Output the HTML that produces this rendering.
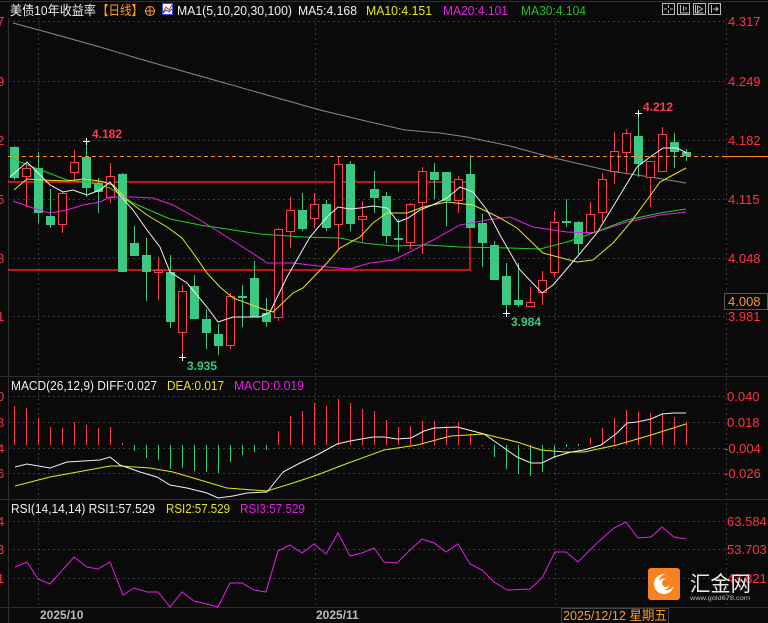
<!DOCTYPE html>
<html><head><meta charset="utf-8"><style>
html,body{margin:0;padding:0;background:#0a0a0a;}
body{width:768px;height:623px;overflow:hidden;position:relative;font-family:"Liberation Sans","Noto Sans CJK SC",sans-serif;}
svg{position:absolute;left:0;top:0;}
</style></head><body>
<svg width="768" height="623" viewBox="0 0 768 623" xmlns="http://www.w3.org/2000/svg" font-family="Liberation Sans, Noto Sans CJK SC, sans-serif">
<rect width="768" height="623" fill="#0a0a0a"/>
<g stroke="#3a3a3a" stroke-width="1" stroke-dasharray="2,3">
<line x1="8" y1="21.5" x2="726" y2="21.5"/><line x1="8" y1="81.5" x2="726" y2="81.5"/>
<line x1="8" y1="140.5" x2="726" y2="140.5"/><line x1="8" y1="199.5" x2="726" y2="199.5"/>
<line x1="8" y1="258.5" x2="726" y2="258.5"/><line x1="8" y1="316.5" x2="726" y2="316.5"/>
<line x1="8" y1="396.5" x2="726" y2="396.5"/><line x1="8" y1="422.5" x2="726" y2="422.5"/>
<line x1="8" y1="448.5" x2="726" y2="448.5"/><line x1="8" y1="473.5" x2="726" y2="473.5"/>
<line x1="8" y1="521.5" x2="726" y2="521.5"/><line x1="8" y1="549.5" x2="726" y2="549.5"/>
<line x1="8" y1="578.5" x2="726" y2="578.5"/>
<line x1="38.5" y1="18" x2="38.5" y2="607"/><line x1="315.5" y1="18" x2="315.5" y2="607"/>
<line x1="555.5" y1="18" x2="555.5" y2="607"/><line x1="726.5" y1="18" x2="726.5" y2="607"/>
</g>
<g stroke="#2e2e2e" stroke-width="1">
<line x1="0" y1="1.5" x2="768" y2="1.5"/>
<line x1="0" y1="376.5" x2="768" y2="376.5"/>
<line x1="0" y1="499.5" x2="768" y2="499.5"/>
<line x1="0" y1="607.5" x2="768" y2="607.5"/>
<line x1="8.5" y1="18" x2="8.5" y2="623"/>
</g>
<g stroke="#ff1a1a" stroke-width="1.5" fill="none">
<polyline points="8,182 470,182 470,270 8,270"/>
</g>
<polyline fill="none" stroke="#8a8a8a" stroke-width="1" points="13,23 50,33 100,47 140,59 200,76 260,93 320,110 370,122 405,130 440,133 467,137 510,146 550,157 610,171 650,177 686,183"/>
<g stroke-width="1">
<g stroke="#3cc882">
<line x1="14.5" y1="146" x2="14.5" y2="180"/><line x1="38.5" y1="152" x2="38.5" y2="223"/><line x1="50.5" y1="189" x2="50.5" y2="228"/>
<line x1="86.5" y1="141" x2="86.5" y2="197"/><line x1="98.5" y1="178" x2="98.5" y2="213"/><line x1="122.5" y1="173" x2="122.5" y2="272"/>
<line x1="134.5" y1="226" x2="134.5" y2="256"/><line x1="146.5" y1="238" x2="146.5" y2="301"/><line x1="170.5" y1="255" x2="170.5" y2="328"/>
<line x1="194.5" y1="275" x2="194.5" y2="319"/><line x1="206.5" y1="309" x2="206.5" y2="349"/><line x1="218.5" y1="324" x2="218.5" y2="355"/>
<line x1="242.5" y1="285" x2="242.5" y2="327"/><line x1="254.5" y1="261" x2="254.5" y2="317"/><line x1="266.5" y1="298" x2="266.5" y2="327"/>
<line x1="302.5" y1="193" x2="302.5" y2="231"/><line x1="326.5" y1="200" x2="326.5" y2="231"/><line x1="350.5" y1="161" x2="350.5" y2="231"/>
<line x1="374.5" y1="171" x2="374.5" y2="213"/><line x1="386.5" y1="192" x2="386.5" y2="243"/><line x1="398.5" y1="219" x2="398.5" y2="252"/>
<line x1="434.5" y1="163" x2="434.5" y2="199"/><line x1="446.5" y1="172" x2="446.5" y2="226"/><line x1="470.5" y1="155" x2="470.5" y2="228"/>
<line x1="482.5" y1="214" x2="482.5" y2="267"/><line x1="494.5" y1="241" x2="494.5" y2="280"/><line x1="506.5" y1="263" x2="506.5" y2="313"/>
<line x1="518.5" y1="263" x2="518.5" y2="307"/><line x1="566.5" y1="199" x2="566.5" y2="227"/><line x1="578.5" y1="221" x2="578.5" y2="254"/>
<line x1="638.5" y1="113" x2="638.5" y2="177"/><line x1="674.5" y1="133" x2="674.5" y2="168"/><line x1="686.5" y1="149" x2="686.5" y2="161"/>
</g>
<g stroke="#ff3b4b">
<line x1="26.5" y1="163" x2="26.5" y2="207"/><line x1="62.5" y1="191" x2="62.5" y2="233"/><line x1="74.5" y1="150" x2="74.5" y2="180"/>
<line x1="110.5" y1="163" x2="110.5" y2="203"/><line x1="158.5" y1="257" x2="158.5" y2="300"/><line x1="182.5" y1="285" x2="182.5" y2="358"/>
<line x1="230.5" y1="293" x2="230.5" y2="349"/><line x1="278.5" y1="228" x2="278.5" y2="321"/><line x1="290.5" y1="197" x2="290.5" y2="248"/>
<line x1="314.5" y1="193" x2="314.5" y2="228"/><line x1="338.5" y1="156" x2="338.5" y2="249"/><line x1="362.5" y1="201" x2="362.5" y2="242"/>
<line x1="410.5" y1="203" x2="410.5" y2="249"/><line x1="422.5" y1="167" x2="422.5" y2="254"/><line x1="458.5" y1="176" x2="458.5" y2="213"/>
<line x1="530.5" y1="287" x2="530.5" y2="307"/><line x1="542.5" y1="271" x2="542.5" y2="305"/><line x1="554.5" y1="211" x2="554.5" y2="277"/>
<line x1="590.5" y1="202" x2="590.5" y2="233"/><line x1="602.5" y1="173" x2="602.5" y2="222"/><line x1="614.5" y1="132" x2="614.5" y2="184"/>
<line x1="626.5" y1="129" x2="626.5" y2="174"/><line x1="650.5" y1="161" x2="650.5" y2="207"/><line x1="662.5" y1="127" x2="662.5" y2="172"/>
</g>
<g fill="#3cc882">
<rect x="10" y="147" width="9" height="31"/><rect x="34" y="168" width="9" height="45"/><rect x="46" y="216" width="9" height="9"/>
<rect x="82" y="157" width="9" height="31"/><rect x="94" y="183" width="9" height="9"/><rect x="118" y="174" width="9" height="98"/>
<rect x="130" y="243" width="9" height="13"/><rect x="142" y="255" width="9" height="17"/><rect x="166" y="272" width="9" height="50"/>
<rect x="190" y="286" width="9" height="33"/><rect x="202" y="319" width="9" height="14"/><rect x="214" y="334" width="9" height="12"/>
<rect x="238" y="296" width="9" height="2"/><rect x="250" y="278" width="9" height="39"/><rect x="262" y="313" width="9" height="9"/>
<rect x="298" y="210" width="9" height="19"/><rect x="322" y="204" width="9" height="24"/><rect x="346" y="164" width="9" height="60"/>
<rect x="370" y="189" width="9" height="9"/><rect x="382" y="196" width="9" height="40"/><rect x="394" y="238" width="9" height="2"/>
<rect x="430" y="172" width="9" height="8"/><rect x="442" y="172" width="9" height="29"/><rect x="466" y="174" width="9" height="54"/>
<rect x="478" y="223" width="9" height="20"/><rect x="490" y="245" width="9" height="35"/><rect x="502" y="276" width="9" height="29"/>
<rect x="514" y="300" width="9" height="5"/><rect x="562" y="221" width="9" height="2"/><rect x="574" y="222" width="9" height="22"/>
<rect x="634" y="136" width="9" height="28"/><rect x="670" y="142" width="9" height="10"/><rect x="682" y="152" width="9" height="4"/>
</g>
<g fill="#0a0a0a" stroke="#ff3b4b">
<rect x="22.5" y="168.5" width="8" height="8"/><rect x="58.5" y="193.5" width="8" height="31"/><rect x="70.5" y="162.5" width="8" height="10"/>
<rect x="106.5" y="176.5" width="8" height="21"/><rect x="154.5" y="270.5" width="8" height="2"/><rect x="178.5" y="291.5" width="8" height="41"/>
<rect x="226.5" y="296.5" width="8" height="49"/><rect x="274.5" y="229.5" width="8" height="88"/><rect x="286.5" y="210.5" width="8" height="21"/>
<rect x="310.5" y="204.5" width="8" height="14"/><rect x="334.5" y="164.5" width="8" height="60"/><rect x="358.5" y="216.5" width="8" height="3"/>
<rect x="406.5" y="204.5" width="8" height="38"/><rect x="418.5" y="171.5" width="8" height="31"/><rect x="454.5" y="179.5" width="8" height="21"/>
<rect x="526.5" y="302.5" width="8" height="4"/><rect x="538.5" y="280.5" width="8" height="12"/><rect x="550.5" y="222.5" width="8" height="50"/>
<rect x="586.5" y="214.5" width="8" height="18"/><rect x="598.5" y="179.5" width="8" height="33"/><rect x="610.5" y="151.5" width="8" height="20"/>
<rect x="622.5" y="133.5" width="8" height="19"/><rect x="646.5" y="161.5" width="8" height="16"/><rect x="658.5" y="134.5" width="8" height="37"/>
</g>
</g>
<polyline fill="none" stroke="#e81ee8" stroke-width="1" points="13,201 33,208 50,213 67,210 83,205 100,202 110,197 133,197 153,198 173,205 200,220 227,237 260,258 267,263 293,263 327,267 350,269 370,263 393,260 410,252 433,240 460,225 487,220 510,217 533,227 567,232 593,233 627,222 660,215 686,212"/>
<polyline fill="none" stroke="#22d022" stroke-width="1" points="10,158 33,167 67,180 87,182 110,188 133,203 170,219 200,225 233,230 260,234 303,237 340,238 363,243 393,246 427,245 460,247 510,248 540,249 567,242 593,233 627,220 660,213 686,209"/>
<polyline fill="none" stroke="#e6e61a" stroke-width="1" points="14,190 27,179 43,180 67,181 83,179 100,181 113,185 127,200 147,215 167,227 182,238 193,253 207,273 220,287 233,298 260,308 273,312 293,293 303,288 327,263 340,248 360,237 373,223 387,213 407,213 423,207 447,202 473,205 490,213 500,218 517,228 543,253 577,262 593,260 613,243 630,223 647,200 660,182 673,175 686,168"/>
<polyline fill="none" stroke="#f0f0f0" stroke-width="1" points="10,177 27,162 37,172 50,185 63,192 73,190 87,195 100,190 110,182 118,193 133,210 147,230 160,247 170,272 187,283 207,307 218,322 233,317 260,317 270,312 287,277 310,237 327,217 338,207 350,209 360,208 373,206 387,208 398,222 408,218 420,210 437,203 447,198 460,187 473,192 487,210 500,235 520,270 542,293 553,285 577,257 597,233 617,200 637,167 650,157 663,148 677,148 687,153"/>
<line x1="8" y1="156.5" x2="724" y2="156.5" stroke="#ff8c1a" stroke-width="1" stroke-dasharray="4,3"/>
<line x1="724" y1="156.5" x2="768" y2="156.5" stroke="#ff8c1a" stroke-width="1"/>
<g stroke="#fff" stroke-width="1">
<line x1="83" y1="141.5" x2="90" y2="141.5"/><line x1="86.5" y1="138" x2="86.5" y2="145"/>
<line x1="635" y1="113.5" x2="642" y2="113.5"/><line x1="638.5" y1="110" x2="638.5" y2="117"/>
<line x1="179" y1="357.5" x2="186" y2="357.5"/><line x1="182.5" y1="354" x2="182.5" y2="361"/>
<line x1="503" y1="313.5" x2="510" y2="313.5"/><line x1="506.5" y1="310" x2="506.5" y2="317"/>
</g>
<g font-size="12" font-weight="bold">
<text x="92" y="138" fill="#ff3b4b">4.182</text>
<text x="643" y="111" fill="#ff3b4b">4.212</text>
<text x="187" y="370" fill="#3cc882">3.935</text>
<text x="511" y="326" fill="#3cc882">3.984</text>
</g>
<g stroke="#ff3b4b" stroke-width="1">
<line x1="14.5" y1="406" x2="14.5" y2="445"/><line x1="26.5" y1="408" x2="26.5" y2="445"/><line x1="38.5" y1="418" x2="38.5" y2="445"/>
<line x1="50.5" y1="427" x2="50.5" y2="445"/><line x1="62.5" y1="428" x2="62.5" y2="445"/><line x1="74.5" y1="422" x2="74.5" y2="445"/>
<line x1="86.5" y1="425" x2="86.5" y2="445"/><line x1="98.5" y1="428" x2="98.5" y2="445"/><line x1="110.5" y1="427" x2="110.5" y2="445"/>
<line x1="122.5" y1="443" x2="122.5" y2="445"/>
<line x1="278.5" y1="431" x2="278.5" y2="445"/><line x1="290.5" y1="416" x2="290.5" y2="445"/><line x1="302.5" y1="411" x2="302.5" y2="445"/>
<line x1="314.5" y1="403" x2="314.5" y2="445"/><line x1="326.5" y1="406" x2="326.5" y2="445"/><line x1="338.5" y1="399" x2="338.5" y2="445"/>
<line x1="350.5" y1="403" x2="350.5" y2="445"/><line x1="362.5" y1="409" x2="362.5" y2="445"/><line x1="374.5" y1="411" x2="374.5" y2="445"/>
<line x1="386.5" y1="420" x2="386.5" y2="445"/><line x1="398.5" y1="427" x2="398.5" y2="445"/><line x1="410.5" y1="426" x2="410.5" y2="445"/>
<line x1="422.5" y1="421" x2="422.5" y2="445"/><line x1="434.5" y1="421" x2="434.5" y2="445"/><line x1="446.5" y1="426" x2="446.5" y2="445"/>
<line x1="458.5" y1="422" x2="458.5" y2="445"/><line x1="470.5" y1="434" x2="470.5" y2="445"/>
<line x1="590.5" y1="438" x2="590.5" y2="445"/><line x1="602.5" y1="428" x2="602.5" y2="445"/><line x1="614.5" y1="418" x2="614.5" y2="445"/>
<line x1="626.5" y1="410" x2="626.5" y2="445"/><line x1="638.5" y1="412" x2="638.5" y2="445"/><line x1="650.5" y1="413" x2="650.5" y2="445"/>
<line x1="662.5" y1="413" x2="662.5" y2="445"/><line x1="674.5" y1="417" x2="674.5" y2="445"/><line x1="686.5" y1="422" x2="686.5" y2="445"/>
</g>
<g stroke="#2ed07a" stroke-width="1">
<line x1="134.5" y1="445" x2="134.5" y2="451"/><line x1="146.5" y1="445" x2="146.5" y2="458"/><line x1="158.5" y1="445" x2="158.5" y2="460"/>
<line x1="170.5" y1="445" x2="170.5" y2="469"/><line x1="182.5" y1="445" x2="182.5" y2="468"/><line x1="194.5" y1="445" x2="194.5" y2="471"/>
<line x1="206.5" y1="445" x2="206.5" y2="472"/><line x1="218.5" y1="445" x2="218.5" y2="473"/><line x1="230.5" y1="445" x2="230.5" y2="462"/>
<line x1="242.5" y1="445" x2="242.5" y2="455"/><line x1="254.5" y1="445" x2="254.5" y2="452"/><line x1="266.5" y1="445" x2="266.5" y2="450"/>
<line x1="482.5" y1="445" x2="482.5" y2="446"/><line x1="494.5" y1="445" x2="494.5" y2="457"/><line x1="506.5" y1="445" x2="506.5" y2="469"/>
<line x1="518.5" y1="445" x2="518.5" y2="474"/><line x1="530.5" y1="445" x2="530.5" y2="476"/><line x1="542.5" y1="445" x2="542.5" y2="472"/>
<line x1="554.5" y1="445" x2="554.5" y2="458"/><line x1="566.5" y1="444" x2="566.5" y2="447"/><line x1="578.5" y1="444" x2="578.5" y2="446"/>
</g>
<polyline fill="none" stroke="#e6e61a" stroke-width="1" points="15,486 50,477 83,471 110,466 120,466 150,468 173,472 200,480 227,488 267,491 293,483 317,475 343,465 384,450 417,445 451,436 484,434 517,442 541,450 564,452 584,452 617,445 651,435 686,424"/>
<polyline fill="none" stroke="#f0f0f0" stroke-width="1" points="15,467 27,464 50,468 67,462 100,460 110,457 120,465 140,472 157,477 170,485 187,488 207,493 218,498 233,496 247,493 267,492 283,472 300,463 317,455 337,444 350,441 373,437 384,437 397,439 411,438 424,431 434,428 457,427 484,434 497,443 517,457 531,463 542,463 554,457 571,452 584,450 601,445 617,433 627,423 637,422 651,419 662,414 674,413 686,413"/>
<polyline fill="none" stroke="#e81ee8" stroke-width="1" points="15,567 27,562 38,579 50,584 74,557 87,567 98,569 110,562 123,595 134,588 147,592 158,592 170,607 182,592 194,601 207,604 218,607 230,583 242,583 254,590 266,592 278,551 290,545 302,553 314,544 326,554 338,533 350,556 362,553 374,548 384,562 397,563 407,553 422,539 434,543 446,552 458,544 470,564 482,570 494,582 507,590 530,589 542,578 555,552 566,552 578,562 597,543 614,528 626,522 638,538 651,537 662,527 674,537 686,539"/>
<g font-size="13" lengthAdjust="spacingAndGlyphs">
<text x="10" y="15" fill="#f0f0f0" textLength="86" lengthAdjust="spacingAndGlyphs">美债10年收益率</text>
<text x="97" y="15" fill="#ff9a2a" textLength="46" lengthAdjust="spacingAndGlyphs">【日线】</text>
<text x="177" y="15" fill="#f0f0f0" textLength="115" lengthAdjust="spacingAndGlyphs">MA1(5,10,20,30,100)</text>
<text x="298" y="15" fill="#f0f0f0" textLength="59" lengthAdjust="spacingAndGlyphs">MA5:4.168</text>
<text x="366" y="15" fill="#e6e61a" textLength="66" lengthAdjust="spacingAndGlyphs">MA10:4.151</text>
<text x="443" y="15" fill="#e81ee8" textLength="65" lengthAdjust="spacingAndGlyphs">MA20:4.101</text>
<text x="521" y="15" fill="#22c022" textLength="65" lengthAdjust="spacingAndGlyphs">MA30:4.104</text>
<text x="11" y="390" fill="#f0f0f0" textLength="146" lengthAdjust="spacingAndGlyphs">MACD(26,12,9) DIFF:0.027</text>
<text x="167" y="390" fill="#e6e61a" textLength="57" lengthAdjust="spacingAndGlyphs">DEA:0.017</text>
<text x="234" y="390" fill="#e81ee8" textLength="70" lengthAdjust="spacingAndGlyphs">MACD:0.019</text>
<text x="11" y="513" fill="#f0f0f0" textLength="144" lengthAdjust="spacingAndGlyphs">RSI(14,14,14) RSI1:57.529</text>
<text x="166" y="513" fill="#e6e61a" textLength="64" lengthAdjust="spacingAndGlyphs">RSI2:57.529</text>
<text x="240" y="513" fill="#e81ee8" textLength="65" lengthAdjust="spacingAndGlyphs">RSI3:57.529</text>
</g>
<g stroke="#ff9a2a" fill="none" stroke-width="1"><circle cx="150" cy="11" r="4.5"/><line x1="145" y1="11" x2="155" y2="11"/><line x1="150" y1="6" x2="150" y2="16"/></g>
<rect x="162.5" y="3.5" width="10" height="11" fill="#fff" stroke="#3050d0"/>
<polyline points="163,12 166,7 169,10 172,5" fill="none" stroke="#e02020" stroke-width="1"/>
<polyline points="163,13 166,10 169,12 172,9" fill="none" stroke="#2040d0" stroke-width="1"/>
<g stroke="#bbb" fill="none" stroke-width="1">
<rect x="662.5" y="3.5" width="12" height="11"/><rect x="677.5" y="3.5" width="12" height="11"/>
<rect x="693.5" y="3.5" width="12" height="11"/><rect x="708.5" y="3.5" width="12" height="11"/>
<path d="M668.5 5v3M668.5 10v3M664 9h3M670 9h3"/>
<path d="M680.5 5v8h8M683.5 6v5M686 7v3"/>
<path d="M695.5 5v8h8M697.5 6l5 3l-5 3z"/>
<path d="M711.5 5v8M713 9h5M716 7l2 2l-2 2"/>
</g>
<g font-size="13" fill="#ff3344">
<text x="728" y="26">4.317</text><text x="728" y="86">4.249</text><text x="728" y="145">4.182</text>
<text x="728" y="204">4.115</text><text x="728" y="263">4.048</text><text x="728" y="321">3.981</text>
<text x="727" y="401">0.040</text><text x="727" y="427">0.018</text><text x="724" y="453">-0.004</text><text x="724" y="478">-0.026</text>
<text x="727" y="526">63.584</text><text x="727" y="554">53.703</text><text x="727" y="583">43.821</text>
</g>
<rect x="724.5" y="293.5" width="43" height="16" fill="#0a0a0a" stroke="#555"/>
<text x="728" y="306" font-size="13" fill="#ff9a2a">4.008</text>
<g font-size="13" fill="#ff3344">
<text x="-3" y="26">7</text><text x="-3" y="86">9</text><text x="-3" y="145">2</text><text x="-3" y="204">5</text>
<text x="-3" y="263">8</text><text x="-3" y="321">1</text>
<text x="-3" y="401">0</text><text x="-3" y="427">8</text><text x="-3" y="453">4</text><text x="-3" y="478">6</text>
<text x="-3" y="526">4</text><text x="-3" y="554">3</text><text x="-3" y="583">1</text>
</g>
<g font-size="12" font-weight="bold" fill="#bbbbbb">
<text x="40" y="619">2025/10</text><text x="316" y="619">2025/11</text>
</g>
<rect x="561.5" y="608.5" width="107" height="15" fill="#0a0a0a" stroke="#444"/>
<text x="563" y="620" font-size="13" fill="#ff9a2a" textLength="104" lengthAdjust="spacingAndGlyphs">2025/12/12 星期五</text>
<rect x="648" y="568" width="32" height="32" rx="3" fill="#f7821e"/>
<circle cx="664" cy="584" r="10" fill="#fff"/>
<circle cx="667" cy="582" r="8" fill="#f7821e"/>
<circle cx="664" cy="584" r="5.5" fill="#fff"/>
<circle cx="666" cy="583" r="4" fill="#f7821e"/>
<text x="690" y="591" font-size="21" fill="#e8e8e8" font-family="Noto Sans CJK SC, sans-serif" textLength="61" lengthAdjust="spacingAndGlyphs">汇金网</text>
<text x="690" y="600" font-size="6.5" fill="#bbbbbb" textLength="60" lengthAdjust="spacingAndGlyphs">www.gold678.com</text>
</svg>
</body></html>
